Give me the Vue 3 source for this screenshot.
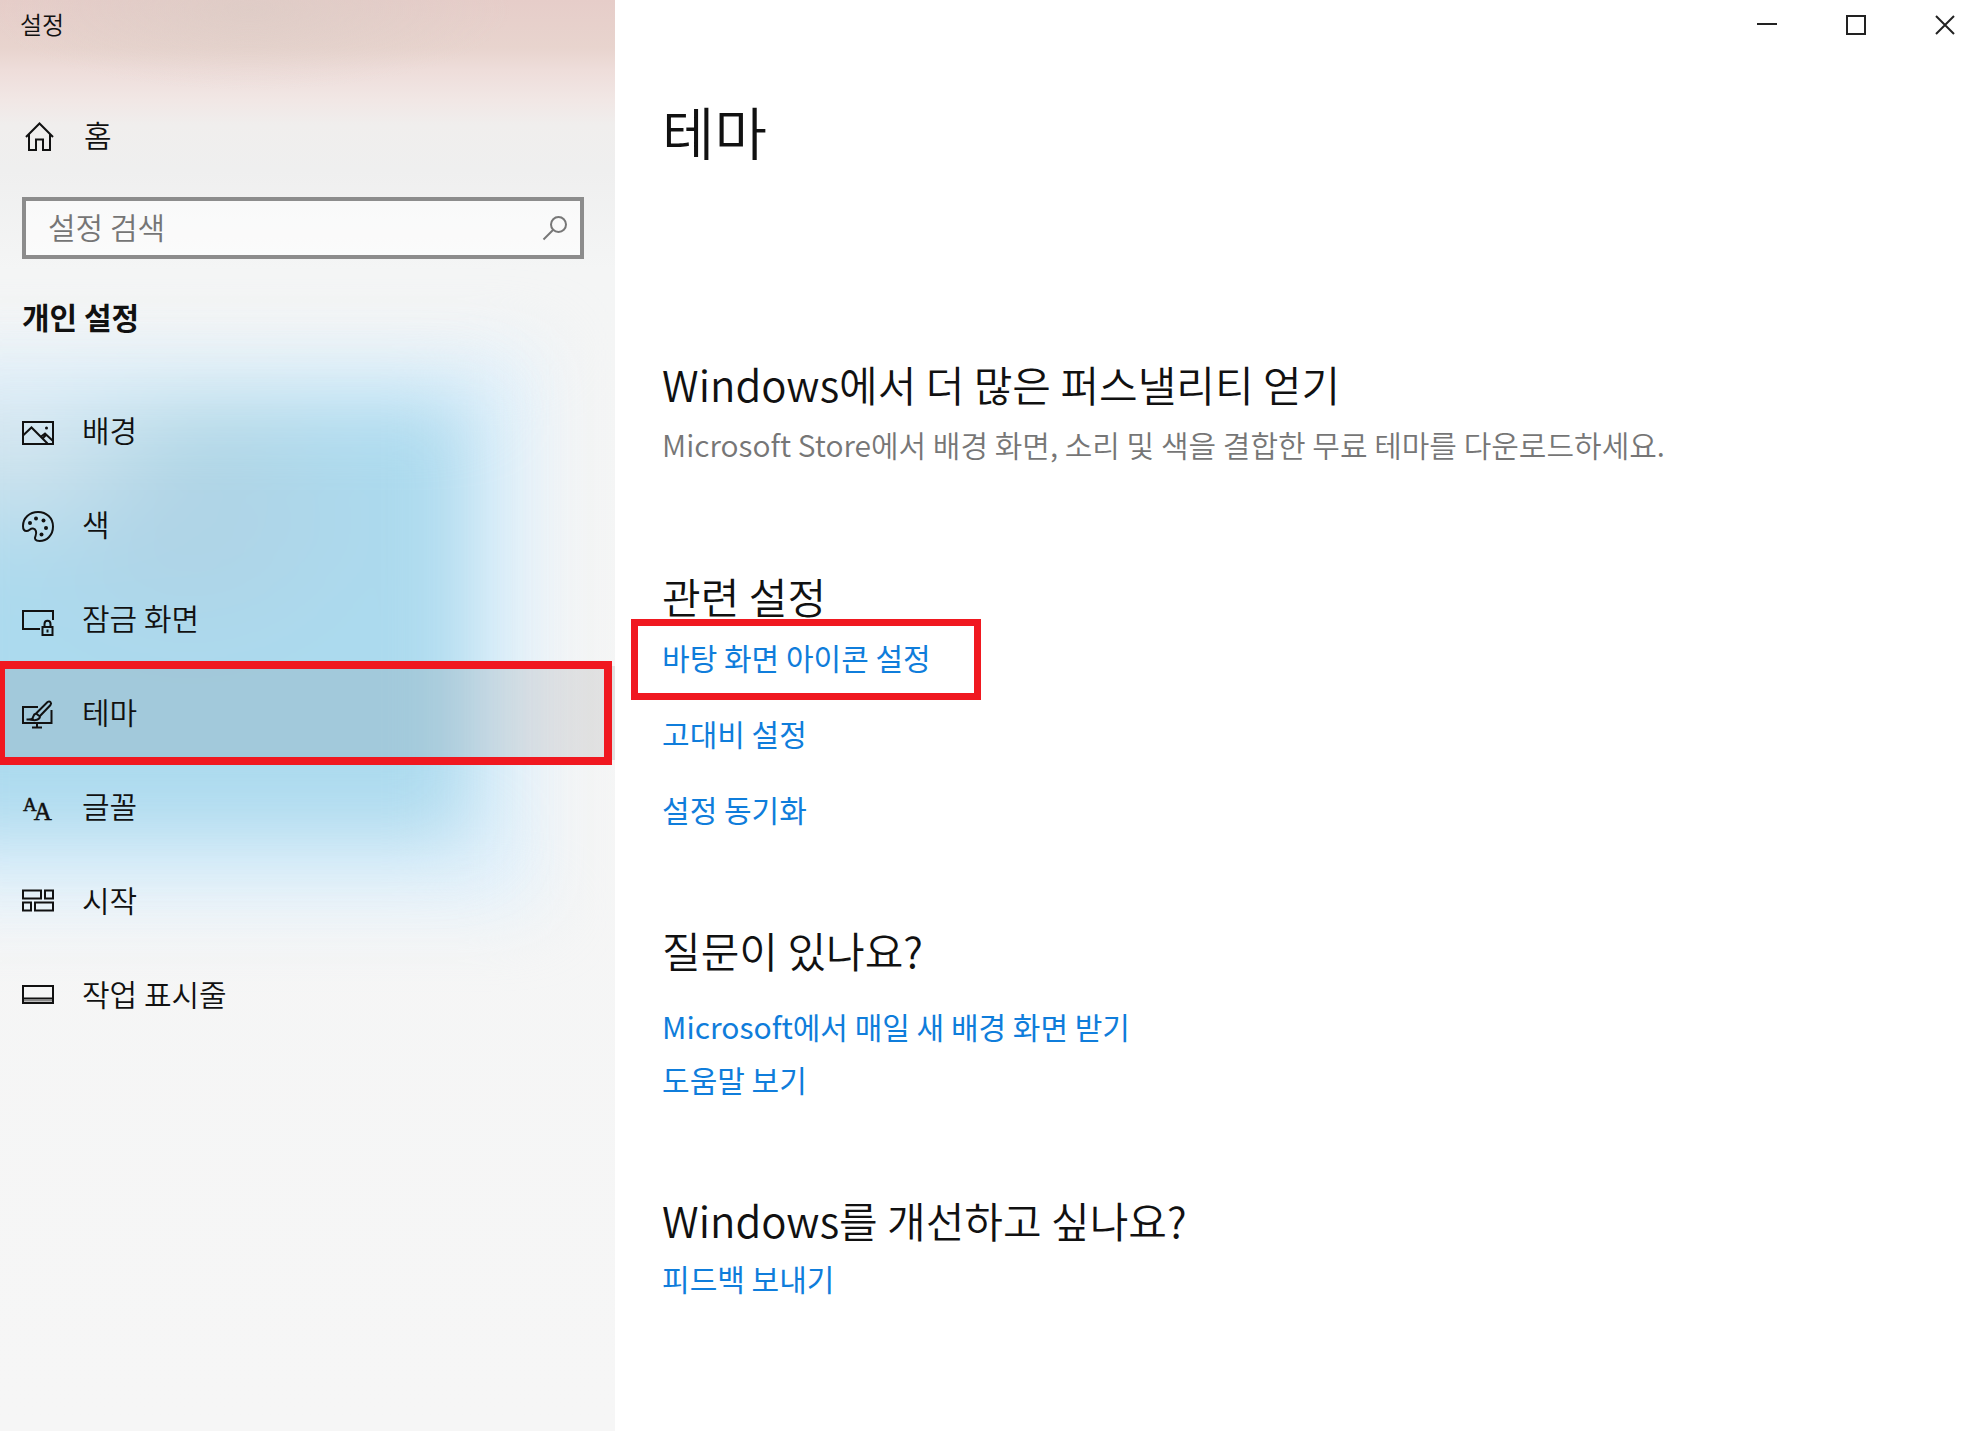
<script setup>
import { ref } from "vue";

const keyword = ref("");
const current = ref("themes");

const menus = [
  { key: "background", label: "배경" },
  { key: "colors", label: "색" },
  { key: "lock", label: "잠금 화면" },
  { key: "themes", label: "테마" },
  { key: "fonts", label: "글꼴" },
  { key: "start", label: "시작" },
  { key: "taskbar", label: "작업 표시줄" },
];
</script>

<template>
  <div class="settings">
    <aside class="sidebar">
      <div class="app-title">설정</div>

      <a href="#home" class="home">
        <svg class="icon" viewBox="0 0 32 32" aria-hidden="true">
          <path d="M2 17 15.500 3.500 29 17M5 14.500V30H12V19.500H19V30H26V14.500" />
        </svg>
        <span>홈</span>
      </a>

      <div class="search">
        <input
          v-model="keyword"
          type="text"
          class="search-input"
          placeholder="설정 검색"
          aria-label="설정 검색"
        />
        <svg class="search-icon" viewBox="0 0 26 26" aria-hidden="true">
          <circle cx="16.500" cy="9.500" r="7.500" />
          <path d="M11 15 1.500 24.500" />
        </svg>
      </div>

      <h2 class="group-title">개인 설정</h2>

      <nav class="menu">
        <a
          v-for="item in menus"
          :key="item.key"
          :href="'#' + item.key"
          class="menu-item"
          :class="{ active: item.key === current }"
          @click="current = item.key"
        >
          <svg class="icon" viewBox="0 0 32 32" aria-hidden="true">
            <g v-if="item.key === 'background'">
              <path d="M1 7H31V29H1ZM1 20.500 9.500 12.500 25.500 28.500M18.500 22 23 18.500 31 26M20 24 24 20" />
              <circle class="solid" cx="24.500" cy="13" r="1.500" />
            </g>
            <g v-else-if="item.key === 'colors'">
              <path
                d="M1 17C1 9 7.500 3 16 3S31 9 31 17.500 25 32 17.500 32C13.500 32 12 30 13.500 27 15 23.500 14 20 11 19.500 8 19 7.500 22 4.500 22 2 22 1 20 1 17Z"
              />
              <circle class="solid" cx="8" cy="14" r="2" />
              <circle class="solid" cx="14" cy="9.500" r="2" />
              <circle class="solid" cx="21.500" cy="11.500" r="2" />
              <circle class="solid" cx="24" cy="19" r="2" />
              <circle class="solid" cx="19.500" cy="25.500" r="2" />
            </g>
            <g v-else-if="item.key === 'lock'">
              <path d="M18 26H1V8H31V17M20.500 24H30.500V32H20.500ZM22.500 24V21C22.500 16.500 28.500 16.500 28.500 21V24M25.500 26.500V29.500" />
            </g>
            <g v-else-if="item.key === 'themes'">
              <path d="M16 10H1V26H29.500V13M4.500 22.500H12M15 26V30M10 30.500H20" />
              <path
                d="M9 22.500C12 22 10 17.500 14 16.500L25.500 5C28 3.500 30 6 28.500 8L18 19C18 23 13 24 9 22.500ZM14 16.500 18 19.500"
              />
            </g>
            <text v-else-if="item.key === 'fonts'" class="letters" x="1" y="20">
              <tspan font-size="19">A</tspan><tspan font-size="25" dx="-3" dy="9">A</tspan>
            </text>
            <g v-else-if="item.key === 'start'">
              <path d="M1 5.500H19V13.500H1ZM23 5.500H31V13.500H23ZM1 17.500H9V25.500H1ZM13 17.500H31V25.500H13Z" />
            </g>
            <g v-else>
              <path d="M1 7H31V24H1ZM1 19.500H31" />
              <path class="shade" d="M2 21.500H30" />
            </g>
          </svg>
          <span>{{ item.label }}</span>
        </a>
      </nav>
    </aside>

    <main class="content">
      <div class="window-buttons">
        <button type="button" aria-label="최소화">
          <svg viewBox="0 0 20 20" aria-hidden="true"><path d="M0 9H20" /></svg>
        </button>
        <button type="button" aria-label="최대화">
          <svg viewBox="0 0 20 20" aria-hidden="true"><path d="M1 1H19V19H1Z" /></svg>
        </button>
        <button type="button" aria-label="닫기">
          <svg viewBox="0 0 20 20" aria-hidden="true"><path d="M1 1 19 19M19 1 1 19" /></svg>
        </button>
      </div>

      <h1>테마</h1>

      <section class="store">
        <h2>Windows에서 더 많은 퍼스낼리티 얻기</h2>
        <p>Microsoft Store에서 배경 화면, 소리 및 색을 결합한 무료 테마를 다운로드하세요.</p>
      </section>

      <section class="related">
        <h2>관련 설정</h2>
        <ul class="links wide">
          <li><a href="#desktop-icons" class="marked">바탕 화면 아이콘 설정</a></li>
          <li><a href="#high-contrast">고대비 설정</a></li>
          <li><a href="#sync">설정 동기화</a></li>
        </ul>
      </section>

      <section class="question">
        <h2>질문이 있나요?</h2>
        <ul class="links">
          <li><a href="#wallpapers">Microsoft에서 매일 새 배경 화면 받기</a></li>
          <li><a href="#help">도움말 보기</a></li>
        </ul>
      </section>

      <section class="feedback">
        <h2>Windows를 개선하고 싶나요?</h2>
        <ul class="links">
          <li><a href="#feedback">피드백 보내기</a></li>
        </ul>
      </section>
    </main>
  </div>
</template>

<style>
body {
  margin: 0;
  background: #ffffff;
}
</style>

<style scoped>
.settings {
  display: flex;
  min-height: 100vh;
  font-family: "Noto Sans CJK KR", sans-serif;
  font-size: 30px;
  line-height: 44px;
  color: #111111;
}

h1,
h2,
p,
ul {
  margin: 0;
  padding: 0;
}

a {
  color: inherit;
  text-decoration: none;
}

/* 왼쪽 메뉴 */
.sidebar {
  position: relative;
  z-index: 0;
  box-sizing: border-box;
  width: 31.05%;
  min-width: 420px;
  flex-shrink: 0;
  overflow: hidden;
  font-weight: 350;
  background:
    radial-gradient(ellipse 260px 80px at 250px 10px, rgba(216, 203, 196, 0.5), transparent),
    linear-gradient(
      #e6cdc9 0,
      #e8d4ce 48px,
      #eeddda 70px,
      #f1e7e5 100px,
      #f0eeed 125px,
      #efefef 170px,
      #f4f5f5 270px,
      #f6f6f6 100%
    );
}

/* 반투명 배경에 비치는 푸른 빛 */
.sidebar::before,
.sidebar::after {
  content: "";
  position: absolute;
  z-index: -1;
  left: -80px;
}

.sidebar::before {
  top: 350px;
  right: 75px;
  height: 560px;
  background: #e3f1fb;
  filter: blur(34px);
}

.sidebar::after {
  top: 400px;
  right: 144px;
  height: 440px;
  background:
    radial-gradient(ellipse 200px 140px at 80px 30px, rgba(224, 232, 238, 0.9), transparent),
    radial-gradient(ellipse 200px 150px at 270px 120px, rgba(178, 207, 224, 0.7), transparent),
    radial-gradient(ellipse 160px 60px at 270px 20px, rgba(184, 220, 226, 0.7), transparent),
    #acdaee;
  filter: blur(38px);
}

.app-title {
  padding-left: 20px;
  font-size: 24px;
  line-height: 48px;
}

.icon {
  width: 32px;
  height: 32px;
  flex-shrink: 0;
  overflow: visible;
  fill: none;
  stroke: #111111;
  stroke-width: 2;
}

.icon .solid {
  fill: #111111;
  stroke: none;
}

.icon .letters {
  font-family: "Liberation Serif", serif;
  fill: #111111;
  stroke-width: 0.5;
}

.icon .shade {
  stroke: #888888;
}

.home,
.menu-item {
  display: flex;
  align-items: center;
  gap: 28px;
  padding-left: 22px;
}

.home span,
.menu-item span {
  padding-bottom: 4px;
}

.home {
  height: 60px;
  margin-top: 58px;
  padding-left: 24px;
}

.search {
  display: flex;
  align-items: center;
  box-sizing: border-box;
  height: 62px;
  margin: 31px 31px 0 22px;
  padding: 0 12px 0 22px;
  border: 4px solid #8c8c8c;
  background: rgba(255, 255, 255, 0.6);
}

.search-input {
  flex: 1;
  min-width: 0;
  height: 44px;
  padding: 0 0 4px;
  border: none;
  outline: none;
  background: transparent;
  font: inherit;
  color: #111111;
}

.search-input::placeholder {
  color: #757575;
  opacity: 1;
}

.search-icon {
  width: 26px;
  height: 26px;
  fill: none;
  stroke: #777777;
  stroke-width: 2;
}

.group-title {
  margin: 35px 0 46px;
  padding-left: 22px;
  font-size: 30px;
  font-weight: 700;
}

.menu-item {
  position: relative;
  height: 94px;
}

.menu-item.active {
  background: rgba(90, 80, 80, 0.12);
}

.menu-item.active::after {
  content: "";
  position: absolute;
  inset: -5px 3px -5px -3px;
  border: 8px solid #f01820;
}

/* 오른쪽 내용 */
.content {
  flex: 1;
  padding-left: 47px;
}

.window-buttons {
  display: flex;
  justify-content: flex-end;
  gap: 17px;
}

.window-buttons button {
  width: 72px;
  height: 50px;
  padding: 0;
  border: none;
  background: transparent;
}

.window-buttons svg {
  display: block;
  width: 20px;
  height: 20px;
  margin: 0 auto;
  fill: none;
  stroke: #222222;
  stroke-width: 2;
}

h1 {
  margin-top: 38px;
  font-size: 57px;
  font-weight: 350;
  line-height: 84px;
}

.content h2 {
  font-size: 42px;
  font-weight: 350;
  line-height: 60px;
}

.store {
  margin-top: 182px;
}

.store p {
  margin-top: 8px;
  font-weight: 350;
  color: #767676;
}

.related {
  margin-top: 100px;
}

.links {
  display: flex;
  flex-direction: column;
  align-items: flex-start;
  gap: 9px;
  list-style: none;
  color: #0f7ddb;
}

.links.wide {
  gap: 32px;
  margin-top: 9px;
}

.links li {
  position: relative;
}

.marked::after {
  content: "";
  position: absolute;
  inset: -16px -50px -21px -31px;
  border: 7px solid #f01820;
}

.question,
.feedback {
  margin-top: 89px;
}

.question .links {
  margin-top: 24px;
}

.feedback .links {
  margin-top: 6px;
}
</style>
